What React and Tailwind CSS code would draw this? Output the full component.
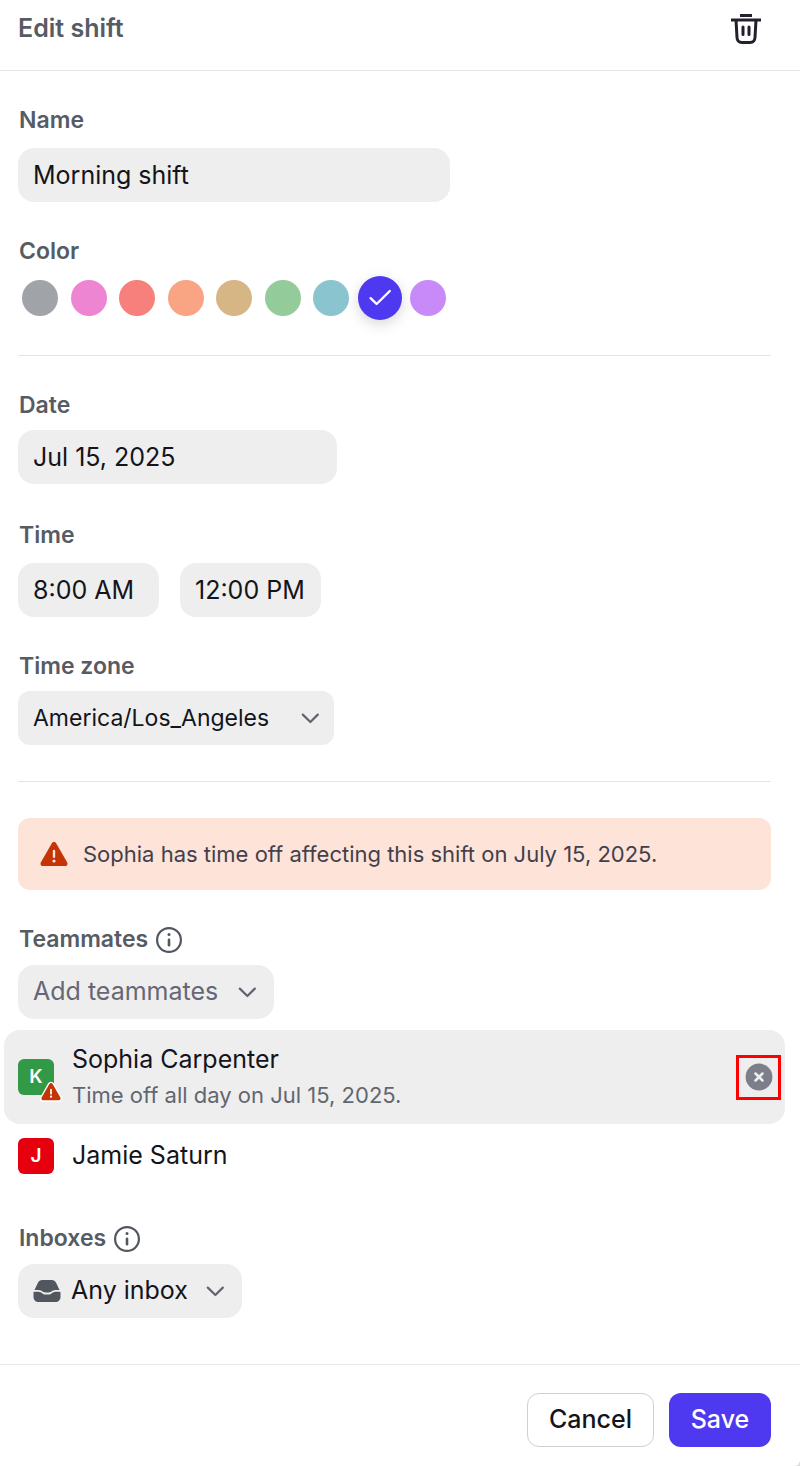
import React, { useState } from 'react';
import clsx from 'clsx';

const COLORS = [
    { name: 'Gray', bg: 'bg-[#a0a4a9]' },
    { name: 'Pink', bg: 'bg-[#ee85d3]' },
    { name: 'Red', bg: 'bg-[#f77f7c]' },
    { name: 'Orange', bg: 'bg-[#f9a482]' },
    { name: 'Sand', bg: 'bg-[#d6b685]' },
    { name: 'Green', bg: 'bg-[#93cb9a]' },
    { name: 'Teal', bg: 'bg-[#8ac4cf]' },
    { name: 'Indigo', bg: 'bg-[#4f39f0]' },
    { name: 'Purple', bg: 'bg-[#c88af8]' },
];

const inputClass = 'h-[54px] rounded-2xl bg-[#eeeeee] px-[15px] text-[25px] text-[#14141a] outline-none';
const labelClass = 'pl-px text-[23px] leading-7 font-semibold text-[#565b64]';

// Icons
const TrashIcon = () => (
    <svg width="30" height="31" viewBox="0 0 30 31" fill="none" stroke="#241f2c" strokeWidth="3" aria-hidden="true">
        <path d="M9 1.5h12" />
        <path d="M0 6h30" />
        <path d="M5 6l1 17.500c.2 3.600 1.900 5 5 5h8c3.100 0 4.800-1.400 5-5L25 6" />
        <path d="M12 13v7.500M18 13v7.500" strokeLinecap="round" />
    </svg>
);

const ChevronIcon = () => (
    <svg width="18" height="11" viewBox="0 0 18 11" fill="none" stroke="#62636f" strokeWidth="2.2" strokeLinecap="round" strokeLinejoin="round" aria-hidden="true">
        <path d="M1.800 1.600L9.400 9l7.400-7.400" />
    </svg>
);

const InfoIcon = () => (
    <svg width="28" height="28" viewBox="0 0 28 28" fill="none" stroke="#51565f" strokeLinecap="round" aria-hidden="true">
        <circle cx="14" cy="15" r="11.900" strokeWidth="2.200" />
        <path d="M14 14.800v5.400" strokeWidth="2.600" />
        <circle cx="14" cy="9.600" r="1.500" fill="#51565f" stroke="none" />
    </svg>
);

const WarningIcon = ({ className, outlined }) => (
    <svg className={className} viewBox="0 0 28 25" aria-hidden="true">
        <path
            d="M11.700 1.400c1.100-1.800 3.500-1.800 4.600 0l10.800 18.900c.9 1.700 0 3.700-2 3.700H2.900c-2 0-2.900-2-2-3.700z"
            fill="#c43407"
            stroke={outlined ? '#ffffff' : 'none'}
            strokeWidth="4"
            paintOrder="stroke"
        />
        <path d="M14 9v5.800" stroke={outlined ? '#ffffff' : '#fde3d8'} strokeWidth="2.400" strokeLinecap="round" />
        <circle cx="14" cy="19" r="1.600" fill={outlined ? '#ffffff' : '#fde3d8'} />
    </svg>
);

const InboxIcon = () => (
    <svg width="28" height="24" viewBox="0 0 28 24" fill="#51565f" aria-hidden="true">
        <path d="M1.500 11L4.800 4C5.800 1.900 7.100 1 9.300 1h9.400c2.200 0 3.500.9 4.500 3l3.300 7c-2.200-.1-4.300 0-6.300.4-1.200.3-1.700 1-2.700 1.600-.6.300-1.200.4-1.900.4h-3.200c-.7 0-1.300-.1-1.900-.4-1-.6-1.500-1.300-2.700-1.600-2-.4-4.100-.5-6.300-.4z" />
        <path d="M.5 13c2.400-.2 4.700-.2 6.900.2 1.300.3 1.700 1.200 2.800 1.700.7.400 1.400.5 2.200.5h3.200c.8 0 1.500-.1 2.200-.5 1.100-.5 1.500-1.400 2.800-1.700 2.200-.4 4.500-.4 6.900-.2v4.500c0 3.600-1.900 5.500-5.500 5.500H6c-3.600 0-5.500-1.900-5.500-5.500z" />
    </svg>
);

const RemoveIcon = () => (
    <svg width="28" height="28" viewBox="0 0 28 28" aria-hidden="true">
        <circle cx="14" cy="14" r="13.400" fill="#7c7e89" />
        <path d="M10.500 10.500l7 7M17.500 10.500l-7 7" stroke="#eeeeee" strokeWidth="2.500" strokeLinecap="round" />
    </svg>
);

const Field = ({ label, htmlFor, className, children }) => (
    <div className={clsx('flex flex-col items-start', className)}>
        <label htmlFor={htmlFor} className={labelClass}>{label}</label>
        {children}
    </div>
);

// Select and its icons share one grid cell
const Dropdown = ({ id, className, icon, chevronClass = 'mr-[15px]', options, ...rest }) => (
    <div className="grid items-center">
        <select
            id={id}
            className={clsx('col-start-1 row-start-1 h-[54px] appearance-none bg-[#eeeeee] outline-none', className)}
            {...rest}
        >
            {options.map((o) => <option key={o}>{o}</option>)}
        </select>
        {icon && <span className="pointer-events-none col-start-1 row-start-1 ml-[15px] justify-self-start">{icon}</span>}
        <span className={clsx('pointer-events-none col-start-1 row-start-1 justify-self-end', chevronClass)}>
            <ChevronIcon />
        </span>
    </div>
);

const Avatar = ({ letter, className, warning }) => (
    <div className={clsx('relative flex size-9 shrink-0 items-center justify-center rounded-md text-[19px] font-semibold text-white', className)}>
        {letter}
        {warning && <WarningIcon outlined className="absolute -right-[7px] -bottom-[6px] h-[18px] w-5 overflow-visible" />}
    </div>
);

const App = () => {
    const [color, setColor] = useState('Indigo');

    return (
        <div className="bg-[#dddddd] font-['Inter',sans-serif]">
            <form className="flex min-h-screen flex-col rounded-br-md bg-white" onSubmit={(e) => e.preventDefault()}>
                <header className="flex h-[71px] items-start justify-between border-b border-[#e6e6ec] pt-[14px] pr-[39px] pl-[18px]">
                    <h1 className="text-[25px] leading-7 font-semibold text-[#565b64]">Edit shift</h1>
                    <button type="button" aria-label="Delete shift">
                        <TrashIcon />
                    </button>
                </header>

                <main className="flex-1 pt-[35px] pr-[29px] pb-[46px] pl-[18px]">
                    <Field label="Name" htmlFor="name" className="gap-[14px]">
                        <input id="name" type="text" defaultValue="Morning shift" className={clsx(inputClass, 'w-[432px]')} />
                    </Field>

                    <fieldset className="mt-[35px]">
                        <legend className={labelClass}>Color</legend>
                        <div className="mt-[11px] flex w-[432px] justify-between">
                            {COLORS.map((c) => (
                                <label key={c.name} className="flex size-11 items-center justify-center">
                                    <input
                                        type="radio"
                                        name="color"
                                        aria-label={c.name}
                                        checked={color === c.name}
                                        onChange={() => setColor(c.name)}
                                        className="sr-only"
                                    />
                                    <span
                                        className={clsx(
                                            'flex items-center justify-center rounded-full',
                                            c.bg,
                                            color === c.name ? 'size-11 shadow-[0_4px_14px_rgba(0,0,0,0.16)]' : 'size-9'
                                        )}
                                    >
                                        {color === c.name && (
                                            <svg width="24" height="18" viewBox="0 0 24 18" fill="none" stroke="white" strokeWidth="2.400" strokeLinecap="round" strokeLinejoin="round" aria-hidden="true">
                                                <path d="M2.600 9.200l6 5.800L21.800 2" />
                                            </svg>
                                        )}
                                    </span>
                                </label>
                            ))}
                        </div>
                    </fieldset>

                    <hr className="mt-[35px] border-[#e4e4e4]" />

                    <Field label="Date" htmlFor="date" className="mt-[35px] gap-[11px]">
                        <input id="date" type="text" defaultValue="Jul 15, 2025" className={clsx(inputClass, 'w-[319px]')} />
                    </Field>

                    <Field label="Time" htmlFor="start" className="mt-[37px] gap-[14px]">
                        <div className="flex gap-[21px]">
                            <input id="start" type="text" defaultValue="8:00 AM" className={clsx(inputClass, 'w-[141px]')} />
                            <input type="text" aria-label="End time" defaultValue="12:00 PM" className={clsx(inputClass, 'w-[141px]')} />
                        </div>
                    </Field>

                    <Field label="Time zone" htmlFor="zone" className="mt-[35px] gap-[11px]">
                        <Dropdown
                            id="zone"
                            options={['America/Los_Angeles', 'America/New_York', 'Europe/London']}
                            className="w-[316px] rounded-xl pl-[15px] text-[23px] text-[#14141a]"
                        />
                    </Field>

                    <hr className="mt-9 border-[#e4e4e4]" />

                    <div role="alert" className="mt-9 flex h-[72px] items-center gap-[15px] rounded-xl bg-[#fde3d8] pl-[22px] text-[22px] text-[#433f4b]">
                        <WarningIcon className="h-[25px] w-7 shrink-0" />
                        <p>Sophia has time off affecting this shift on July 15, 2025.</p>
                    </div>

                    <section className="mt-[35px]">
                        <div className="flex items-center gap-[7px]">
                            <label htmlFor="teammates" className={labelClass}>Teammates</label>
                            <InfoIcon />
                        </div>
                        <div className="mt-3 flex">
                            <Dropdown
                                id="teammates"
                                options={['Add teammates']}
                                className="w-64 rounded-2xl pl-[15px] text-[25px] text-[#666775]"
                                chevronClass="mr-[18px]"
                            />
                        </div>

                        <ul className="mt-[11px] -mr-[14px] -ml-[14px] text-[25px] text-[#14141a]">
                            <li className="flex h-[94px] items-center rounded-2xl bg-[#eeeeee] pr-1 pl-[14px]">
                                <Avatar letter="K" className="bg-[#329a46]" warning />
                                <div className="ml-[18px] flex-1">
                                    <div className="leading-9">Sophia Carpenter</div>
                                    <div className="text-[22px] leading-9 text-[#62666f]">Time off all day on Jul 15, 2025.</div>
                                </div>
                                <button type="button" aria-label="Remove Sophia Carpenter" className="flex size-[45px] items-center justify-center border-3 border-[#ff0000]">
                                    <RemoveIcon />
                                </button>
                            </li>
                            <li className="flex h-16 items-center pl-[14px]">
                                <Avatar letter="J" className="bg-[#e6000f]" />
                                <div className="ml-[18px]">Jamie Saturn</div>
                            </li>
                        </ul>
                    </section>

                    <section className="mt-9">
                        <div className="flex items-center gap-[7px]">
                            <label htmlFor="inboxes" className={labelClass}>Inboxes</label>
                            <InfoIcon />
                        </div>
                        <div className="mt-3 flex">
                            <Dropdown
                                id="inboxes"
                                options={['Any inbox', 'Support', 'Sales']}
                                icon={<InboxIcon />}
                                className="w-56 rounded-2xl pl-[53px] text-[25px] text-[#14141a]"
                                chevronClass="mr-[18px]"
                            />
                        </div>
                    </section>
                </main>

                <footer className="flex justify-end gap-[15px] border-t border-[#e6e6ec] pt-7 pr-[29px] pb-[19px] text-[25px] font-medium">
                    <button type="button" className="h-[54px] w-[127px] rounded-xl border border-[#cfcfd4] text-[#14141a]">Cancel</button>
                    <button type="submit" className="h-[54px] w-[102px] rounded-xl bg-[#4f39f0] text-white">Save</button>
                </footer>
            </form>
        </div>
    );
};

export default App;
